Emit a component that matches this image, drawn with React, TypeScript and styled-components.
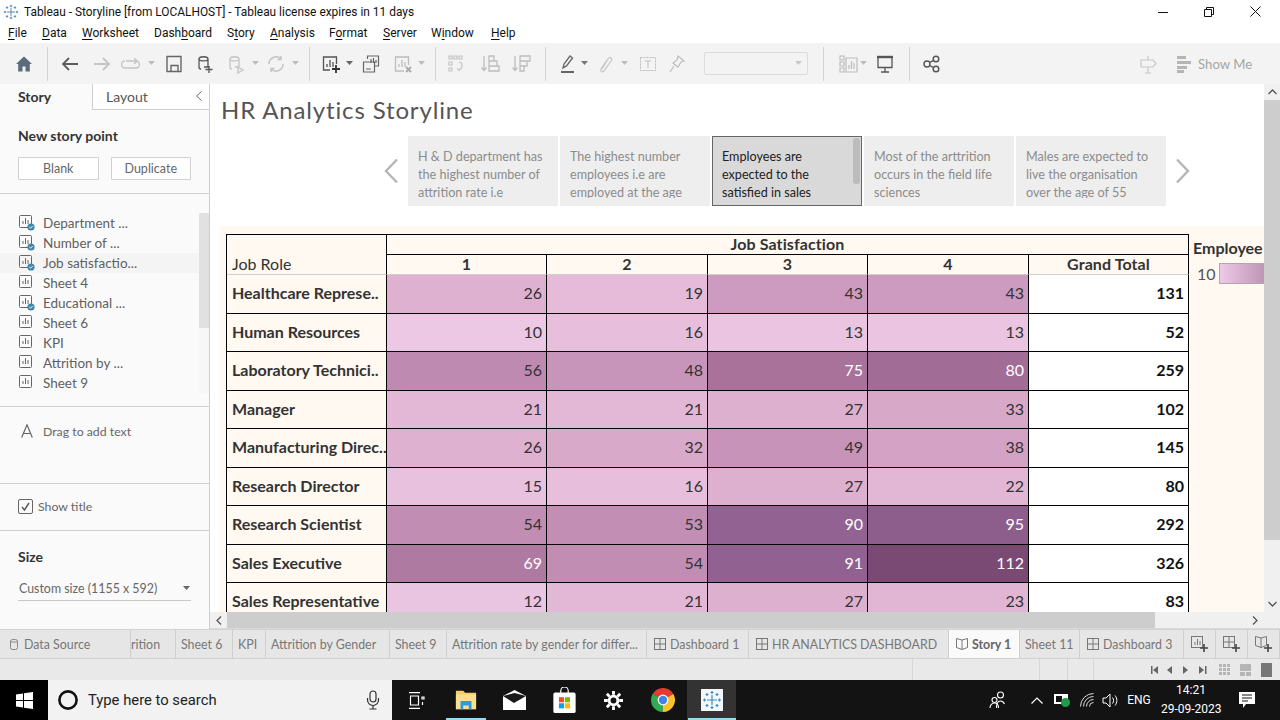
import React from "react";
import styled, { createGlobalStyle } from "styled-components";

const GlobalStyle = createGlobalStyle`
  html, body { margin: 0; padding: 0; background: #fff; }
  * { box-sizing: border-box; }
`;

const Page = styled.div`
  width: 1280px;
  height: 720px;
  overflow: hidden;
  display: flex;
  flex-direction: column;
  font-family: "Lato", "Liberation Sans", sans-serif;
  color: #555;
`;

const TitleBar = styled.div`
  height: 23px;
  flex: none;
  display: flex;
  align-items: center;
  padding: 0 2px 0 3px;
  background: #fff;
  font-family: "Roboto", "Liberation Sans", sans-serif;
  font-size: 11.9px;
  color: #111;
`;

const TitleText = styled.span`
  margin-left: 5px;
  flex: 1;
  white-space: nowrap;
`;

const WinButton = styled.div`
  width: 46px;
  height: 23px;
  display: flex;
  align-items: center;
  justify-content: center;
`;

const MenuBar = styled.div`
  height: 20px;
  flex: none;
  display: flex;
  align-items: center;
  padding-left: 8px;
  background: #fff;
  font-family: "Roboto", "Liberation Sans", sans-serif;
  font-size: 12px;
  color: #111;
`;

const MenuItem = styled.span<{ $w: number }>`
  width: ${(p) => p.$w}px;
  flex: none;
  u { text-underline-offset: 2px; }
`;

const Toolbar = styled.div`
  height: 41px;
  flex: none;
  display: flex;
  align-items: center;
  background: #f3f3f3;
`;

const Tool = styled.div<{ $ml: number; $w?: number }>`
  flex: none;
  width: ${(p) => p.$w ?? 20}px;
  height: 24px;
  margin-left: ${(p) => p.$ml}px;
  display: flex;
  align-items: center;
  justify-content: center;
`;

const ToolDivider = styled.div<{ $ml: number }>`
  flex: none;
  width: 1px;
  height: 34px;
  margin-left: ${(p) => p.$ml}px;
  background: #d4d4d4;
`;

const FieldBox = styled.div`
  flex: none;
  width: 104px;
  height: 23px;
  margin-left: 17px;
  border: 1px solid #dcdcdc;
  border-radius: 2px;
  display: flex;
  align-items: center;
  justify-content: flex-end;
  padding-right: 4px;
`;

const ShowMe = styled.div`
  flex: none;
  margin-left: 19px;
  display: flex;
  align-items: center;
  gap: 7px;
  font-size: 13.2px;
  color: #a6a6a6;
`;

const Main = styled.div`
  flex: 1;
  min-height: 0;
  display: flex;
`;

const Sidebar = styled.aside`
  width: 210px;
  flex: none;
  background: #fafafa;
  border-right: 1px solid #cfcfcf;
  display: flex;
  flex-direction: column;
`;

const PaneTabs = styled.div`
  height: 26px;
  flex: none;
  display: flex;
  font-size: 14px;
`;

const PaneTab = styled.div<{ $active?: boolean }>`
  width: ${(p) => (p.$active ? "92px" : "117px")};
  padding: 0 6px 1px ${(p) => (p.$active ? "18px" : "13px")};
  display: flex;
  align-items: center;
  justify-content: space-between;
  font-weight: ${(p) => (p.$active ? 700 : 400)};
  color: ${(p) => (p.$active ? "#333" : "#555")};
  background: ${(p) => (p.$active ? "#fafafa" : "#fff")};
  border-left: ${(p) => (p.$active ? "none" : "1px solid #cfcfcf")};
  border-bottom: ${(p) => (p.$active ? "none" : "1px solid #cfcfcf")};
`;

const Section = styled.section<{ $h: number }>`
  height: ${(p) => p.$h}px;
  flex: none;
  border-bottom: 1px solid #cfcfcf;
`;

const NewPoint = styled(Section)`
  padding: 17px 18px 0;
`;

const SectionHead = styled.div`
  font-size: 14px;
  font-weight: 700;
  color: #333;
  line-height: 17px;
`;

const ButtonRow = styled.div`
  display: flex;
  gap: 12px;
  margin-top: 13px;
`;

const PaneButton = styled.div`
  height: 23px;
  flex: 1;
  background: #fff;
  border: 1px solid #d0d0d0;
  border-radius: 1px;
  display: flex;
  align-items: center;
  justify-content: center;
  font-size: 12.5px;
  color: #666;
`;

const SheetSection = styled(Section)`
  padding-top: 19px;
  display: flex;
`;

const SheetList = styled.div`
  flex: 1;
`;

const SheetRow = styled.div<{ $hover?: boolean }>`
  height: 20px;
  padding-left: 19px;
  display: flex;
  align-items: center;
  gap: 8px;
  font-size: 13.5px;
  color: #5f5f5f;
  background: ${(p) => (p.$hover ? "#f4f4f4" : "transparent")};
`;

const Glyph = styled.svg`
  flex: none;
`;

const SideScroll = styled.div`
  width: 10px;
  height: 180px;
  background: #f7f7f7;
`;

const SideThumb = styled.div`
  height: 115px;
  background: #e1e1e1;
`;

const DragText = styled(Section)`
  padding: 17px 0 0 21px;
  display: flex;
  gap: 10px;
  font-size: 12.3px;
  color: #666;
`;

const ShowTitle = styled(Section)`
  padding: 0 0 2px 18px;
  display: flex;
  align-items: center;
  gap: 5px;
  font-size: 12.3px;
  color: #666;
`;

const CheckBox = styled.div`
  width: 15px;
  height: 15px;
  border: 1px solid #666;
  border-radius: 2px;
  display: flex;
  align-items: center;
  justify-content: center;
`;

const SizeBlock = styled.div`
  padding: 17px 18px 0;
`;

const SizeSelect = styled.div`
  margin-top: 12px;
  height: 24px;
  border-bottom: 1px solid #c8c8c8;
  display: flex;
  align-items: center;
  justify-content: space-between;
  padding-left: 1px;
  font-size: 12.4px;
  color: #666;
`;

const Stage = styled.div`
  flex: 1;
  min-width: 0;
  display: grid;
  grid-template-columns: 1054px 16px;
  grid-template-rows: 528px 17px;
`;

const StoryPane = styled.div`
  background: #fff;
  overflow: hidden;
  display: flex;
  flex-direction: column;
`;

const StoryTitle = styled.h1`
  margin: 0;
  height: 52px;
  flex: none;
  padding: 10px 0 0 11px;
  font-size: 24px;
  font-weight: 400;
  line-height: 32px;
  letter-spacing: 0.85px;
  color: #555;
`;

const Navigator = styled.div`
  height: 70px;
  flex: none;
  margin-left: 168px;
  display: flex;
  align-items: center;
  gap: 2px;
`;

const NavArrow = styled.div<{ $next?: boolean }>`
  width: ${(p) => (p.$next ? "32px" : "28px")};
  padding: ${(p) => (p.$next ? "0 2px 0 0" : "0 2px 0 0")};
  display: flex;
  justify-content: center;
`;

const StoryPoint = styled.div<{ $current?: boolean }>`
  position: relative;
  width: 150px;
  height: 70px;
  flex: none;
  overflow: hidden;
  padding: ${(p) => (p.$current ? "11px 7px 0 9px" : "12px 8px 0 10px")};
  background: ${(p) => (p.$current ? "#d9d9d9" : "#eeeeee")};
  border: ${(p) => (p.$current ? "1px solid #666" : "none")};
  color: ${(p) => (p.$current ? "#222" : "#8c8c8c")};
  font-size: 12.6px;
  line-height: 18px;
`;

const PointText = styled.div`
  height: 50px;
  overflow: hidden;
`;

const PointScroll = styled.div`
  position: absolute;
  top: 1px;
  right: 1px;
  width: 7px;
  height: 46px;
  border-radius: 3px;
  background: #bcbcbc;
`;

const Canvas = styled.div`
  margin: 20px 0 0 9px;
  flex: 1;
  min-height: 0;
  overflow: hidden;
  padding: 8px 0 0 7px;
  background: #fff9f1;
  display: flex;
  align-items: flex-start;
  gap: 4px;
`;

const Crosstab = styled.div`
  flex: none;
  display: grid;
  grid-template-columns: 160px 160px 161px 160px 161px 160px;
  grid-template-rows: 20px 20px;
  grid-auto-rows: 38.5px;
  border-left: 1px solid #000;
  border-top: 1px solid #000;
  font-size: 16px;
  color: #333;
`;

const RoleHeader = styled.div`
  grid-row: span 2;
  border-right: 1px solid #000;
  border-bottom: 1px solid #cfcfcf;
  padding-left: 5px;
  display: flex;
  align-items: flex-end;
  line-height: 20px;
`;

const GroupHeader = styled.div`
  grid-column: span 5;
  border-right: 1px solid #000;
  border-bottom: 1px solid #000;
  text-align: center;
  font-weight: 700;
  letter-spacing: 0.1px;
  line-height: 18px;
`;

const ColHeader = styled.div`
  border-right: 1px solid #000;
  border-bottom: 1px solid #cfcfcf;
  text-align: center;
  font-weight: 700;
  letter-spacing: 0.1px;
  line-height: 18px;
`;

const RowLabel = styled.div`
  border-right: 1px solid #000;
  border-bottom: 1px solid #000;
  padding: 0 0 2px 5px;
  display: flex;
  align-items: center;
  font-weight: 700;
  white-space: nowrap;
`;

const Measure = styled.div<{ $light?: boolean }>`
  border-right: 1px solid #000;
  border-bottom: 1px solid #000;
  padding: 0 4px 2px 0;
  display: flex;
  align-items: center;
  justify-content: flex-end;
  color: ${(p) => (p.$light ? "#fff" : "#333")};
`;

const TotalCell = styled(Measure)`
  background: #fff;
  font-weight: 700;
  color: #111;
`;

const Legend = styled.div`
  flex: none;
  width: 72px;
  overflow: hidden;
  white-space: nowrap;
`;

const LegendTitle = styled.div`
  font-size: 16px;
  font-weight: 700;
  line-height: 20px;
  margin-top: 4px;
  color: #333;
`;

const LegendRow = styled.div`
  display: flex;
  align-items: center;
  gap: 3px;
  margin-top: 5px;
  padding-left: 4px;
  font-size: 16px;
  color: #555;
`;

const LegendBar = styled.div`
  width: 90px;
  height: 21px;
  flex: none;
  border: 1px solid #b5a6ad;
  background: linear-gradient(90deg, #eecae6, #7b4a73 120%);
`;

const VScroll = styled.div`
  grid-row: 1;
  grid-column: 2;
  background: #f0f0f0;
  display: flex;
  flex-direction: column;
`;

const VThumb = styled.div`
  width: 16px;
  height: 440px;
  background: #cdcdcd;
`;

const ScrollCap = styled.div`
  flex: none;
  width: 16px;
  height: 16px;
  display: flex;
  align-items: center;
  justify-content: center;
`;

const ScrollGap = styled.div`
  flex: 1;
`;

const HScroll = styled.div`
  grid-row: 2;
  grid-column: 1 / span 2;
  background: #f0f0f0;
  display: flex;
  padding: 0 17px 0 1px;
  border-bottom: 1px solid #d9d9d9;
`;

const HThumb = styled.div`
  width: 928px;
  height: 16px;
  background: #cdcdcd;
`;

const TabStrip = styled.div`
  height: 30px;
  flex: none;
  display: flex;
  background: #e6e6e6;
  border-top: 1px solid #d2d2d2;
  border-bottom: 1px solid #d2d2d2;
  font-size: 12.4px;
  color: #777;
  white-space: nowrap;
`;

const SheetTab = styled.div<{ $w: number; $current?: boolean; $start: number }>`
  width: ${(p) => p.$w}px;
  flex: none;
  display: flex;
  align-items: center;
  padding-left: ${(p) => p.$start}px;
  gap: 3px;
  border-right: 1px solid #cfcfcf;
  overflow: hidden;
  background: ${(p) => (p.$current ? "#fafafa" : "transparent")};
  color: ${(p) => (p.$current ? "#666" : "#777")};
  font-weight: ${(p) => (p.$current ? 700 : 400)};
`;

const StatusBar = styled.div`
  height: 21px;
  flex: none;
  display: flex;
  align-items: center;
  background: #e9e9e9;
`;

const StatusCell = styled.div<{ $w: number }>`
  width: ${(p) => p.$w}px;
  height: 21px;
  flex: none;
  border-right: 1px solid #d6d6d6;
`;

const StatusIcons = styled.div`
  display: flex;
  align-items: center;
  margin-left: 57px;
  gap: 9px;
`;

const Taskbar = styled.div`
  height: 40px;
  flex: none;
  display: flex;
  align-items: center;
  background: #131313;
  color: #fff;
  font-family: "Roboto", "Liberation Sans", sans-serif;
`;

const StartButton = styled.div`
  width: 48px;
  height: 40px;
  background: #000;
  display: flex;
  align-items: center;
  justify-content: center;
`;

const SearchBox = styled.div`
  width: 344px;
  height: 40px;
  background: #f2f2f2;
  display: flex;
  align-items: center;
  padding: 0 12px 0 9px;
  gap: 9px;
  font-size: 14.8px;
  color: #222;
`;

const SearchLabel = styled.span`
  flex: 1;
`;

const TaskItem = styled.div<{ $on?: boolean; $bar?: number }>`
  position: relative;
  width: 49.2px;
  height: 40px;
  flex: none;
  display: flex;
  align-items: center;
  justify-content: center;
  background: ${(p) => (p.$on ? "#333" : "transparent")};
  &::after {
    content: "";
    position: absolute;
    bottom: 0;
    left: 50%;
    width: ${(p) => p.$bar ?? 0}px;
    height: 2px;
    transform: translateX(-50%);
    background: #99d9f5;
  }
`;

const Tray = styled.div`
  margin-left: auto;
  display: flex;
  align-items: center;
  height: 40px;
  padding-right: 7px;
  font-size: 12px;
`;

const TrayIcon = styled.div<{ $w: number }>`
  width: ${(p) => p.$w}px;
  flex: none;
  display: flex;
  justify-content: center;
`;

const Clock = styled.div`
  width: 60px;
  flex: none;
  text-align: center;
  white-space: nowrap;
  line-height: 19px;
  font-size: 12px;
`;

type IconProps = { s?: number; c?: string; w?: number; children: React.ReactNode };

const Ic = ({ s = 20, c = "#666", w = 1.5, children }: IconProps) => (
  <svg width={s} height={s} viewBox="0 0 20 20" fill="none" stroke={c} strokeWidth={w}>
    {children}
  </svg>
);

const Caret = ({ c = "#8a8a8a" }: { c?: string }) => (
  <svg width="8" height="5" viewBox="0 0 8 5">
    <path d="M0 0h7L3.5 4z" fill={c} />
  </svg>
);

const SheetGlyph = ({ badge }: { badge?: boolean }) => (
  <Glyph width="16" height="18" viewBox="0 0 16 18" fill="none">
    <rect x="0.5" y="1.5" width="12" height="12" rx="1" stroke="#666" />
    <path d="M4 10V7M6.500 10V4M9 10V6" stroke="#666" />
    {badge && <circle cx="12" cy="13" r="3.6" fill="#3f86a8" />}
    {badge && <path d="M10.300 13l1.200 1.200 2.200-2.200" stroke="#fff" />}
  </Glyph>
);

const TableauMark = ({ s = 16, c = "#4e86b5" }: { s?: number; c?: string }) => (
  <svg width={s} height={s} viewBox="0 0 20 20" fill="none" stroke={c} strokeWidth="1.2">
    <path d="M10 5v10M5 10h10M10 1v3M8.500 2.500h3M10 16v3M8.500 17.500h3M1 10h3M2.500 8.500v3M16 10h3M17.500 8.500v3" />
    <path d="M5 3v3M3.500 4.500h3M15 3v3M13.500 4.500h3M5 14v3M3.500 15.500h3M15 14v3M13.500 15.500h3" />
  </svg>
);

const sheets = [
  { name: "Department ...", badge: true },
  { name: "Number of ...", badge: true },
  { name: "Job satisfactio...", badge: true, hover: true },
  { name: "Sheet 4" },
  { name: "Educational ...", badge: true },
  { name: "Sheet 6" },
  { name: "KPI" },
  { name: "Attrition by ..." },
  { name: "Sheet 9" },
];

const points = [
  "H & D department has the highest number of attrition rate i.e",
  "The highest number employees i.e are employed at the age",
  "Employees are expected to the satisfied in sales",
  "Most of the arttrition occurs in the field life sciences",
  "Males are expected to live the organisation over the age of 55",
];

const rows: [string, number, number, number, number, number][] = [
  ["Healthcare Represe..", 26, 19, 43, 43, 131],
  ["Human Resources", 10, 16, 13, 13, 52],
  ["Laboratory Technici..", 56, 48, 75, 80, 259],
  ["Manager", 21, 21, 27, 33, 102],
  ["Manufacturing Direc..", 26, 32, 49, 38, 145],
  ["Research Director", 15, 16, 27, 22, 80],
  ["Research Scientist", 54, 53, 90, 95, 292],
  ["Sales Executive", 69, 54, 91, 112, 326],
  ["Sales Representative", 12, 21, 27, 23, 83],
];

// colour stops read off the legend, value -> rgb
const stops: [number, number[]][] = [
  [10, [236, 200, 228]],
  [26, [223, 177, 208]],
  [50, [198, 146, 184]],
  [75, [168, 114, 154]],
  [90, [146, 98, 146]],
  [112, [122, 74, 116]],
];

const heat = (v: number) => {
  for (let i = 1; i < stops.length; i++) {
    const [hi, b] = stops[i];
    const [lo, a] = stops[i - 1];
    if (v <= hi) {
      const t = (v - lo) / (hi - lo);
      const mix = a.map((x, k) => Math.round(x + (b[k] - x) * t));
      return `rgb(${mix.join(",")})`;
    }
  }
  return "#7a4a74";
};

const tabs = [
  { w: 131, label: "Data Source", icon: "db", start: 9 },
  { w: 45, label: "rition", start: 0 },
  { w: 57, label: "Sheet 6", start: 5 },
  { w: 33, label: "KPI", start: 5 },
  { w: 124, label: "Attrition by Gender", start: 5 },
  { w: 57, label: "Sheet 9", start: 5 },
  { w: 200, label: "Attrition rate by gender for differ...", start: 5 },
  { w: 102, label: "Dashboard 1", icon: "dash", start: 6 },
  { w: 200, label: "HR ANALYTICS DASHBOARD", icon: "dash", start: 6 },
  { w: 71, label: "Story 1", icon: "story", current: true, start: 6 },
  { w: 60, label: "Sheet 11", start: 5 },
  { w: 104, label: "Dashboard 3", icon: "dash", start: 6 },
];

const DashGlyph = () => (
  <svg width="14" height="14" viewBox="0 0 14 14" fill="none" stroke="#777">
    <rect x="1.5" y="1.5" width="11" height="11" />
    <path d="M7 1.500v11M1.500 7h11" />
  </svg>
);

const StoryGlyph = () => (
  <svg width="14" height="14" viewBox="0 0 14 14" fill="none" stroke="#777">
    <path d="M7 3L1.500 1.500v9L7 12.500l5.500-2v-9zM7 3v9.500" />
  </svg>
);

const DbGlyph = () => (
  <svg width="12" height="13" viewBox="0 0 12 13" fill="none" stroke="#888">
    <rect x="1.5" y="1.5" width="7" height="10" rx="2" />
    <path d="M1.500 4h7" />
  </svg>
);

const NewTab = ({ kind }: { kind: string }) => (
  <SheetTab $w={32} $start={6}>
    <svg width="20" height="18" viewBox="0 0 20 18" fill="none" stroke="#777">
      {kind === "sheet" && <rect x="1.5" y="1.5" width="11" height="11" />}
      {kind === "sheet" && <path d="M5 10V7M7.500 10V4M10 10V6" />}
      {kind === "dash" && <rect x="1.5" y="1.5" width="11" height="11" />}
      {kind === "dash" && <path d="M7 1.500v11M1.500 7h11" />}
      {kind === "story" && <path d="M7 3L1.500 1.500v9L7 12.500l5.500-2v-9zM7 3v9.500" />}
      <path d="M14 9v8M10 13h8" stroke="#444" strokeWidth="1.6" />
    </svg>
  </SheetTab>
);

const ToolbarIcons = () => (
  <Toolbar>
    <Tool $ml={14}>
      <svg width="18" height="18" viewBox="0 0 18 18">
        <path d="M9 1.500L1 9h2.200v7.500h4.300v-5h3v5h4.300V9H17z" fill="#5a6b7c" />
      </svg>
    </Tool>
    <ToolDivider $ml={13} />
    <Tool $ml={12}>
      <Ic c="#5c5c5c" w={1.8}><path d="M18 10H3M9 4l-6 6 6 6" /></Ic>
    </Tool>
    <Tool $ml={12}>
      <Ic c="#c4c4c4" w={1.8}><path d="M2 10h15M11 4l6 6-6 6" /></Ic>
    </Tool>
    <Tool $ml={9}>
      <Ic c="#c4c4c4" w={1.4}><path d="M5 7h10a3 3 0 010 7H4a2 2 0 010-7M13 4l3 3-3 3" /></Ic>
    </Tool>
    <Tool $ml={5} $w={12}><Caret c="#bdbdbd" /></Tool>
    <Tool $ml={6}>
      <Ic c="#666" w={1.4}><path d="M3 2.500h14v15H3zM7 17.500v-6h7v6" /></Ic>
    </Tool>
    <Tool $ml={11}>
      <Ic c="#555" w={1.3}><path d="M4 5c0-3 9-3 9 0v8H9M4 5v8c0 1 1 2 2 2M4 5c0 2.500 9 2.500 9 0M14 12v7M10.500 15.500h7" /></Ic>
    </Tool>
    <Tool $ml={11}>
      <Ic c="#c4c4c4" w={1.3}><path d="M4 5c0-3 9-3 9 0v8H9M4 5v8c0 1 1 2 2 2M4 5c0 2.500 9 2.500 9 0M12 13l5 3-5 3z" /></Ic>
    </Tool>
    <Tool $ml={4} $w={12}><Caret c="#bdbdbd" /></Tool>
    <Tool $ml={4}>
      <Ic c="#c4c4c4" w={1.5}><path d="M3 10a7 7 0 0112-5M17 10a7 7 0 01-12 5M15 2v3.500h-3.500M5 18v-3.500h3.500" /></Ic>
    </Tool>
    <Tool $ml={4} $w={12}><Caret c="#bdbdbd" /></Tool>
    <ToolDivider $ml={7} />
    <Tool $ml={11}>
      <Ic c="#555" w={1.3}><path d="M9 16H2.500V3h13v7M6 13v-3M9 13V6M12 13V8" /><path d="M15 11v8M11 15h8" stroke="#333" strokeWidth="1.8" /></Ic>
    </Tool>
    <Tool $ml={3} $w={12}><Caret c="#666" /></Tool>
    <Tool $ml={5}>
      <Ic c="#666" w={1.2}><path d="M6.500 5V2h11v10h-4M2.500 8h11v10h-11zM10 5v4M12.500 4v5M15 6v3M5 15h5" /></Ic>
    </Tool>
    <Tool $ml={12}>
      <Ic c="#bdbdbd" w={1.3}><path d="M11 17H2.500V3h13v8M6 13v-3M9 13V6M12 13V8" /><path d="M13 13l5 5M18 13l-5 5" stroke="#a8a8a8" strokeWidth="1.8" /></Ic>
    </Tool>
    <Tool $ml={3} $w={12}><Caret c="#bdbdbd" /></Tool>
    <ToolDivider $ml={7} />
    <Tool $ml={11}>
      <Ic c="#c4c4c4" w={1.2}><path d="M2 2h3v3H2zM7 2h3v3H7zM12 2h3v3h-3zM2 8h3v3H2zM2 14h3v3H2zM12 8c4 0 4 6 0 8M10 14l2 2.500L14 14" /></Ic>
    </Tool>
    <Tool $ml={13}>
      <Ic c="#bdbdbd" w={1.3}><path d="M4 2v14M1.500 13.500L4 16.500l2.500-3M9 2h5v5H9zM9 7h8v5H9zM9 12h10v5H9z" /></Ic>
    </Tool>
    <Tool $ml={11}>
      <Ic c="#bdbdbd" w={1.3}><path d="M4 2v14M1.500 13.500L4 16.500l2.500-3M9 12h4v5H9zM9 7h7v5H9zM9 2h10v5H9z" /></Ic>
    </Tool>
    <ToolDivider $ml={14} />
    <Tool $ml={12}>
      <Ic c="#666" w={1.3}><path d="M5 14l1-4L12 2l2.500 2-6 8zM5 14l3-2" /><path d="M3 18h13" stroke="#555" strokeWidth="1.8" /></Ic>
    </Tool>
    <Tool $ml={1} $w={12}><Caret c="#777" /></Tool>
    <Tool $ml={4}>
      <Ic c="#c8c8c8" w={1.3}><path d="M7 15l6-10c2-3 5-1 3 2L9 17c-2 2-4 0-3-2l6-9" /></Ic>
    </Tool>
    <Tool $ml={4} $w={12}><Caret c="#bdbdbd" /></Tool>
    <Tool $ml={7}>
      <Ic c="#bdbdbd" w={1}>
        <rect x="2.5" y="3.5" width="15" height="13" strokeDasharray="2 1" />
        <path d="M7 7h6M10 7v7" />
      </Ic>
    </Tool>
    <Tool $ml={9}>
      <Ic c="#bdbdbd" w={1.2}><path d="M11 2l6 5-3 1-3 5-5-4 4-3zM7 12l-4 6" /></Ic>
    </Tool>
    <FieldBox><Caret c="#c8c8c8" /></FieldBox>
    <ToolDivider $ml={15} />
    <Tool $ml={14}>
      <Ic c="#bdbdbd" w={1.2}><path d="M2 2h4v4H2zM2 8h4v4H2zM2 14h4v4H2zM8 4h11v14H8zM11 15v-4M13.500 15V7M16 15v-6" /></Ic>
    </Tool>
    <Tool $ml={0} $w={12}><Caret c="#bdbdbd" /></Tool>
    <Tool $ml={5}>
      <Ic c="#555" w={1.3}><path d="M3 3.500v10h14v-10M10 13.500V18M6 18h8" /><path d="M2 3h16" strokeWidth="2.4" /></Ic>
    </Tool>
    <ToolDivider $ml={14} />
    <Tool $ml={12}>
      <Ic c="#555" w={1.4}>
        <circle cx="5" cy="10" r="3" />
        <circle cx="14" cy="5" r="2.8" />
        <circle cx="14" cy="15" r="2.8" />
        <path d="M7.600 8.500l4-2.200M7.600 11.500l4 2.200" />
      </Ic>
    </Tool>
    <Tool $ml={196}>
      <Ic c="#c8c8c8" w={1.2}><path d="M3 6h12l3 3.500L15 13H3zM10 2v4M10 13v6M7 19h6" /></Ic>
    </Tool>
    <ShowMe>
      <svg width="14" height="18" viewBox="0 0 14 18">
        <path d="M0 1h9v3H0zM0 6h14v3H0zM0 11h10v3H0zM0 15h7v3H0z" fill="#b5b5b5" />
      </svg>
      Show Me
    </ShowMe>
  </Toolbar>
);

const App = () => (
  <Page>
    <GlobalStyle />
    <TitleBar>
      <TableauMark />
      <TitleText>Tableau - Storyline [from LOCALHOST] - Tableau license expires in 11 days</TitleText>
      <WinButton>
        <svg width="10" height="10"><path d="M0 5.500h10" stroke="#111" /></svg>
      </WinButton>
      <WinButton>
        <svg width="10" height="10" fill="none" stroke="#111"><path d="M.5 2.500h7v7h-7zM2.500 2.500v-2h7v7h-2" /></svg>
      </WinButton>
      <WinButton>
        <svg width="11" height="11" stroke="#111"><path d="M.5.5l10 10M10.500.5l-10 10" /></svg>
      </WinButton>
    </TitleBar>
    <MenuBar>
      <MenuItem $w={34}><u>F</u>ile</MenuItem>
      <MenuItem $w={40}><u>D</u>ata</MenuItem>
      <MenuItem $w={72}><u>W</u>orksheet</MenuItem>
      <MenuItem $w={73}>Dash<u>b</u>oard</MenuItem>
      <MenuItem $w={43}>S<u>t</u>ory</MenuItem>
      <MenuItem $w={59}><u>A</u>nalysis</MenuItem>
      <MenuItem $w={54}>F<u>o</u>rmat</MenuItem>
      <MenuItem $w={48}><u>S</u>erver</MenuItem>
      <MenuItem $w={60}>W<u>i</u>ndow</MenuItem>
      <MenuItem $w={40}><u>H</u>elp</MenuItem>
    </MenuBar>
    <ToolbarIcons />
    <Main>
      <Sidebar>
        <PaneTabs>
          <PaneTab $active>Story</PaneTab>
          <PaneTab>
            Layout
            <svg width="8" height="12" fill="none" stroke="#666"><path d="M6.500 1.500L1.500 6l5 4.500" /></svg>
          </PaneTab>
        </PaneTabs>
        <NewPoint $h={84}>
          <SectionHead>New story point</SectionHead>
          <ButtonRow>
            <PaneButton>Blank</PaneButton>
            <PaneButton>Duplicate</PaneButton>
          </ButtonRow>
        </NewPoint>
        <SheetSection $h={213}>
          <SheetList>
            {sheets.map((s) => (
              <SheetRow key={s.name} $hover={s.hover}>
                <SheetGlyph badge={s.badge} />
                {s.name}
              </SheetRow>
            ))}
          </SheetList>
          <SideScroll><SideThumb /></SideScroll>
        </SheetSection>
        <DragText $h={77}>
          <Glyph width="12" height="14" viewBox="0 0 12 14" fill="none" stroke="#666" strokeWidth="1.2">
            <path d="M.7 13.500L6 .8l5.300 12.700M2.500 9.500h7" />
          </Glyph>
          Drag to add text
        </DragText>
        <ShowTitle $h={47}>
          <CheckBox>
            <svg width="11" height="11" fill="none" stroke="#555" strokeWidth="1.4"><path d="M2 6l2.500 3L9 2" /></svg>
          </CheckBox>
          Show title
        </ShowTitle>
        <SizeBlock>
          <SectionHead>Size</SectionHead>
          <SizeSelect>
            Custom size (1155 x 592)
            <Caret c="#666" />
          </SizeSelect>
        </SizeBlock>
      </Sidebar>
      <Stage>
        <StoryPane>
          <StoryTitle>HR Analytics Storyline</StoryTitle>
          <Navigator>
            <NavArrow>
              <svg width="16" height="26" fill="none" stroke="#b5b5b5" strokeWidth="2.4"><path d="M14 1.500L3 13l11 11.500" /></svg>
            </NavArrow>
            {points.map((text, i) => (
              <StoryPoint key={text} $current={i === 2}>
                <PointText>{text}</PointText>
                {i === 2 && <PointScroll />}
              </StoryPoint>
            ))}
            <NavArrow $next>
              <svg width="16" height="26" fill="none" stroke="#b5b5b5" strokeWidth="2.4"><path d="M2 1.500L13 13 2 24.500" /></svg>
            </NavArrow>
          </Navigator>
          <Canvas>
            <Crosstab>
              <RoleHeader>Job Role</RoleHeader>
              <GroupHeader>Job Satisfaction</GroupHeader>
              {["1", "2", "3", "4", "Grand Total"].map((h) => (
                <ColHeader key={h}>{h}</ColHeader>
              ))}
              {rows.map(([role, a, b, c, d, total]) => (
                <React.Fragment key={role}>
                  <RowLabel>{role}</RowLabel>
                  {[a, b, c, d].map((v, i) => (
                    <Measure key={i} $light={v >= 69} style={{ background: heat(v) }}>
                      {v}
                    </Measure>
                  ))}
                  <TotalCell>{total}</TotalCell>
                </React.Fragment>
              ))}
            </Crosstab>
            <Legend>
              <LegendTitle>Employee</LegendTitle>
              <LegendRow>
                10
                <LegendBar />
              </LegendRow>
            </Legend>
          </Canvas>
        </StoryPane>
        <VScroll>
          <ScrollCap>
            <svg width="9" height="6" fill="none" stroke="#555" strokeWidth="1.3"><path d="M.5 5L4.500 1l4 4" /></svg>
          </ScrollCap>
          <VThumb />
          <ScrollGap />
          <ScrollCap>
            <svg width="9" height="6" fill="none" stroke="#555" strokeWidth="1.3"><path d="M.5 1l4 4 4-4" /></svg>
          </ScrollCap>
        </VScroll>
        <HScroll>
          <ScrollCap>
            <svg width="6" height="9" fill="none" stroke="#555" strokeWidth="1.3"><path d="M5 .5L1 4.500l4 4" /></svg>
          </ScrollCap>
          <HThumb />
          <ScrollGap />
          <ScrollCap>
            <svg width="6" height="9" fill="none" stroke="#555" strokeWidth="1.3"><path d="M1 .5l4 4-4 4" /></svg>
          </ScrollCap>
        </HScroll>
      </Stage>
    </Main>
    <TabStrip>
      {tabs.map((t) => (
        <SheetTab key={t.label} $w={t.w} $current={t.current} $start={t.start}>
          {t.icon === "db" && <DbGlyph />}
          {t.icon === "dash" && <DashGlyph />}
          {t.icon === "story" && <StoryGlyph />}
          {t.label}
        </SheetTab>
      ))}
      <NewTab kind="sheet" />
      <NewTab kind="dash" />
      <NewTab kind="story" />
    </TabStrip>
    <StatusBar>
      <StatusCell $w={913} />
      <StatusCell $w={127} />
      <StatusCell $w={28} />
      <StatusCell $w={26} />
      <StatusIcons>
        <svg width="58" height="12" viewBox="0 0 58 12" fill="#666">
          <path d="M0 2h1.500v8H0zM7 2v8L2 6zM21 2v8l-5-4zM32 2l5 4-5 4zM48 2l5 4-5 4zM54 2h1.500v8H54z" />
        </svg>
        <svg width="66" height="14" viewBox="0 0 66 14" fill="#b5b5b5">
          <path d="M1 1h3v3H1zM5 1h3v3H5zM9 1h3v3H9zM1 5h3v3H1zM5 5h3v3H5zM9 5h3v3H9zM1 9h3v3H1zM5 9h3v3H5zM9 9h3v3H9z" />
          <path d="M22 1h11v7H22zM22 9h5v4h-5zM28 9h5v4h-5z" />
          <path d="M43 0h11v14H43z" fill="#777" />
        </svg>
      </StatusIcons>
    </StatusBar>
    <Taskbar>
      <StartButton>
        <svg width="17" height="17" viewBox="0 0 17 17" fill="#fff">
          <path d="M0 2.400L7 1.400v6.600H0zM8 1.300L17 0v8H8zM0 9h7v6.600L0 14.600zM8 9h9v8L8 15.700z" />
        </svg>
      </StartButton>
      <SearchBox>
        <svg width="22" height="22" fill="none" stroke="#111" strokeWidth="2.6"><circle cx="11" cy="11" r="8.6" /></svg>
        <SearchLabel>Type here to search</SearchLabel>
        <svg width="14" height="20" viewBox="0 0 14 20" fill="none" stroke="#333" strokeWidth="1.2">
          <rect x="4" y="1" width="6" height="11" rx="3" />
          <path d="M1.500 8v2a5.500 5.500 0 0011 0V8M7 15.500V19M3.500 19h7" />
        </svg>
      </SearchBox>
      <TaskItem>
        <svg width="17" height="17" viewBox="0 0 17 17" fill="none" stroke="#fff" strokeWidth="1.2">
          <path d="M1 .6h11M1 16.400h11M2.500 4h8v9h-8zM14 5h2v2h-2zM14.500 10v3" />
        </svg>
      </TaskItem>
      <TaskItem $bar={40}>
        <svg width="22" height="22" viewBox="0 0 24 24">
          <path d="M1 2h8l2 2h12v18H1z" fill="#f4cf6a" />
          <path d="M1 6h22v16H1z" fill="#f9df91" />
          <path d="M6 13h12v9h-3v-4H9v4H6z" fill="#2d9be0" />
        </svg>
      </TaskItem>
      <TaskItem>
        <svg width="25" height="20" viewBox="0 0 25 20">
          <path d="M1 6L12.500 0 24 6v14H1z" fill="#fff" />
          <path d="M1 6l11 7L24 6 12.500 3z" fill="#1a1a1a" />
        </svg>
      </TaskItem>
      <TaskItem>
        <svg width="23" height="26" viewBox="0 0 24 28">
          <path d="M8 7V4a4 4 0 018 0v3" fill="none" stroke="#fff" strokeWidth="1.3" />
          <rect x="0" y="6" width="24" height="22" rx="2" fill="#fff" />
          <path d="M6 11h5.500v5.500H6z" fill="#f25022" />
          <path d="M12.500 11H18v5.500h-5.500z" fill="#7fba00" />
          <path d="M6 17.500h5.500V23H6z" fill="#00a4ef" />
          <path d="M12.500 17.500H18V23h-5.500z" fill="#ffb900" />
        </svg>
      </TaskItem>
      <TaskItem>
        <svg width="19" height="19" viewBox="0 0 20 20" fill="none" stroke="#fff">
          <circle cx="10" cy="10" r="4.6" strokeWidth="3" />
          <path d="M10 0v4M10 16v4M0 10h4M16 10h4M3 3l2.800 2.800M14.200 14.200L17 17M17 3l-2.800 2.800M5.800 14.200L3 17" strokeWidth="3" />
        </svg>
      </TaskItem>
      <TaskItem>
        <svg width="24" height="24" viewBox="0 0 24 24" fill="none">
          <circle cx="12" cy="12" r="8" stroke="#e33b2e" strokeWidth="8" strokeDasharray="16.8 33.6" transform="rotate(-150 12 12)" />
          <circle cx="12" cy="12" r="8" stroke="#fbc02d" strokeWidth="8" strokeDasharray="16.8 33.6" transform="rotate(-30 12 12)" />
          <circle cx="12" cy="12" r="8" stroke="#34a853" strokeWidth="8" strokeDasharray="16.8 33.6" transform="rotate(90 12 12)" />
          <circle cx="12" cy="12" r="5.4" fill="#fff" />
          <circle cx="12" cy="12" r="4.2" fill="#3f83e8" />
        </svg>
      </TaskItem>
      <TaskItem $on $bar={48}>
        <svg width="22" height="22" viewBox="0 0 22 22">
          <rect width="22" height="22" fill="#f3f7fa" />
          <g transform="translate(1 1)"><TableauMark s={20} c="#3a8bc4" /></g>
        </svg>
      </TaskItem>
      <Tray>
        <TrayIcon $w={46}>
          <svg width="18" height="18" viewBox="0 0 18 18" fill="none" stroke="#fff" strokeWidth="1.1">
            <circle cx="11.500" cy="4" r="3" />
            <path d="M7.500 17c0-5 2-7 4-7s3 1 4 3" />
            <circle cx="5.500" cy="9" r="2.500" />
            <path d="M1 17c0-3 2-5 4.500-5s4 2 4 5" />
          </svg>
        </TrayIcon>
        <TrayIcon $w={32}>
          <svg width="12" height="7" fill="none" stroke="#fff" strokeWidth="1.2"><path d="M.5 6.500l5.500-5.500 5.500 5.500" /></svg>
        </TrayIcon>
        <TrayIcon $w={18}>
          <svg width="16" height="16" viewBox="0 0 16 16">
            <rect x="0" y="2" width="14" height="10" fill="#fff" />
            <rect x="2" y="4" width="6" height="6" fill="#121212" />
            <circle cx="11.500" cy="10.500" r="4.500" fill="#1e9c4a" />
          </svg>
        </TrayIcon>
        <TrayIcon $w={32}>
          <svg width="14" height="14" viewBox="0 0 14 14" fill="none" stroke="#ddd">
            <path d="M.5 13.500a13 13 0 0113-13M3.500 13.500a10 10 0 0110-10M6.500 13.500a7 7 0 017-7M9.500 13.500a4 4 0 014-4" />
          </svg>
        </TrayIcon>
        <TrayIcon $w={14}>
          <Glyph width="17" height="15" viewBox="0 0 17 15" fill="none" stroke="#fff">
            <path d="M1 5h3l4-4v13l-4-4H1zM10.500 4.500c1.500 2 1.500 4 0 6M13 2.500c2.500 3 2.500 7 0 10" />
          </Glyph>
        </TrayIcon>
        <TrayIcon $w={44}>ENG</TrayIcon>
        <Clock>
          14:21
          <br />
          29-09-2023
        </Clock>
        <TrayIcon $w={52}>
          <svg width="17" height="17" viewBox="0 0 17 17">
            <path d="M0 0h16v12H7l-3 4v-4H0z" fill="#fff" />
            <path d="M3 3h10M3 6h10M3 9h6" stroke="#121212" />
          </svg>
        </TrayIcon>
      </Tray>
    </Taskbar>
  </Page>
);

export default App;
